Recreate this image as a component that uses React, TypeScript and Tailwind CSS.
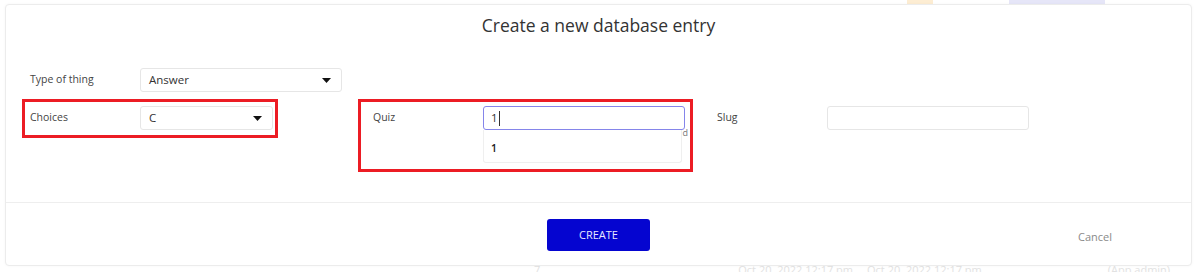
import React from "react";

function Caret() {
  return (
    <svg width="9" height="5" viewBox="0 0 9 5" className="shrink-0">
      <path d="M0 0 L9 0 L4.5 5 Z" fill="#111" />
    </svg>
  );
}

function Select({ value, width }: { value: string; width: string }) {
  return (
    <div
      className={`${width} h-[24px] flex items-center justify-between pl-[8px] pr-[10px] border border-[#e6e6e6] rounded-[3px] bg-white text-[11.5px] text-[#333]`}
    >
      <span>{value}</span>
      <Caret />
    </div>
  );
}

export default function App() {
  return (
    <div
      className="relative w-[1200px] h-[272px] overflow-hidden bg-white"
      style={{ fontFamily: '"Open Sans", "Noto Sans", sans-serif' }}
    >
      {/* faint background page */}
      <div className="absolute left-[907px] top-0 w-[26px] h-[5px] bg-[#fde9c8] opacity-80" />
      <div className="absolute left-[1009px] top-0 w-[96px] h-[5px] bg-[#e6e6f8]" />
      <div className="absolute top-[264px] left-0 w-full flex text-[11px] leading-[12px] text-[#e2e2e2] whitespace-nowrap">
        <span className="ml-[534px]">7</span>
        <span className="ml-[198px]">Oct 20, 2022 12:17 pm</span>
        <span className="ml-[14px]">Oct 20, 2022 12:17 pm</span>
        <span className="ml-[126px]">(App admin)</span>
      </div>

      {/* modal */}
      <div className="absolute left-[5px] top-[4px] w-[1187px] h-[262px] bg-white border border-[#ececec] rounded-[4px] flex flex-col shadow-[0_0_3px_rgba(0,0,0,0.04)]">
        <div className="h-[197px] flex flex-col">
          <div className="pt-[7px] text-center text-[17.5px] text-[#333] leading-[26px]">
            Create a new database entry
          </div>
          <div className="mt-[30px] pl-[24px] flex flex-col gap-[14px]">
            {/* row 1 */}
            <div className="flex items-center">
              <div className="w-[110px] text-[10.5px] text-[#444]">Type of thing</div>
              <Select value="Answer" width="w-[202px]" />
            </div>
            {/* row 2 */}
            <div className="flex items-start">
              <div className="relative flex items-center w-[312px]">
                <div className="absolute left-[-8px] top-[-7px] w-[256px] h-[39px] border-[3px] border-[#ec1c24]" />
                <div className="w-[110px] text-[10.5px] text-[#444]">Choices</div>
                <Select value="C" width="w-[133px]" />
              </div>
              <div className="relative ml-[31px] flex items-start w-[312px]">
                <div className="absolute left-[-15px] top-[-7px] w-[335px] h-[73px] border-[3px] border-[#ec1c24]" />
                <div className="w-[110px] h-[24px] flex items-center text-[10.5px] text-[#444]">Quiz</div>
                <div className="relative flex flex-col w-[202px]">
                  <div className="h-[24px] flex items-center pl-[7px] border border-[#8585ea] rounded-[3px] bg-white text-[11.5px] text-[#333]">
                    <span>1</span>
                    <span className="ml-[1px] w-[1px] h-[15px] bg-[#333]" />
                  </div>
                  <div className="w-[199px] h-[33px] flex items-center pt-[5px] pl-[7px] border border-t-0 border-[#efefef] rounded-b-[3px] bg-white text-[10.5px] font-semibold text-[#222]">
                    1
                  </div>
                  <span className="absolute right-[-3px] top-[22px] text-[9px] leading-[9px] text-[#777]">d</span>
                </div>
              </div>
              <div className="ml-[32px] flex items-center w-[312px]">
                <div className="w-[110px] text-[10.5px] text-[#444]">Slug</div>
                <div className="w-[202px] h-[24px] border border-[#e6e6e6] rounded-[3px] bg-white" />
              </div>
            </div>
          </div>
        </div>
        <div className="border-t border-[#eeeeee] flex-1 relative flex items-center justify-center">
          <div className="w-[103px] h-[32px] mt-[2px] rounded-[3px] bg-[#0505d0] flex items-center justify-center text-[11px] text-[#e8e8ff]">
            CREATE
          </div>
          <div className="absolute left-[1072px] top-[26px] text-[11px] text-[#8a8a8a]">Cancel</div>
        </div>
      </div>
    </div>
  );
}
